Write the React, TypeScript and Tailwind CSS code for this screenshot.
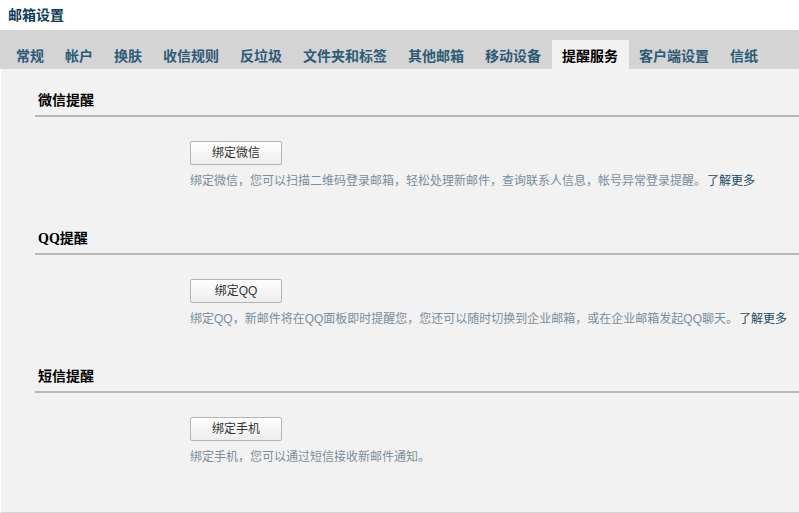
const TABS = ["常规", "帐户", "换肤", "收信规则", "反垃圾", "文件夹和标签", "其他邮箱", "移动设备", "提醒服务", "客户端设置", "信纸"];
const ACTIVE = "提醒服务";

const SECTIONS: { title: string; button: string; desc: string; more?: boolean }[] = [
  {
    title: "微信提醒",
    button: "绑定微信",
    desc: "绑定微信，您可以扫描二维码登录邮箱，轻松处理新邮件，查询联系人信息，帐号异常登录提醒。",
    more: true,
  },
  {
    title: "QQ提醒",
    button: "绑定QQ",
    desc: "绑定QQ，新邮件将在QQ面板即时提醒您，您还可以随时切换到企业邮箱，或在企业邮箱发起QQ聊天。",
    more: true,
  },
  {
    title: "短信提醒",
    button: "绑定手机",
    desc: "绑定手机，您可以通过短信接收新邮件通知。",
  },
];

const cjk = "font-['Liberation_Sans','Noto_Sans_CJK_SC',sans-serif]";

export default function App() {
  return (
    <div className={`w-[799px] h-[513px] bg-white ${cjk}`}>
      <div className="h-[30px] pl-[8px] text-[14px] leading-[30px] font-bold text-[#103d58]">邮箱设置</div>

      <div className="flex h-[39px] items-end bg-[#d4d4d4] pl-[6px]">
        {TABS.map((t) => (
          <div
            key={t}
            className={`h-[29px] pl-[10px] pr-[11px] pt-[6px] text-[14px] leading-[20px] font-bold ${
              t === ACTIVE ? "bg-[#f2f2f2] text-black" : "text-[#2c5b76]"
            }`}
          >
            {t}
          </div>
        ))}
      </div>

      <div className="h-[444px] border-l border-b border-l-white border-b-[#d6d6d6] bg-[#f2f2f2] pl-[34px] pt-[22px]">
        {SECTIONS.map((s, i) => (
          <section key={s.title} className={i > 0 ? "mt-[39px]" : ""}>
            <h2 className="h-[20px] pl-[3px] text-[14px] leading-[20px] font-bold text-black font-['Liberation_Serif','Noto_Sans_CJK_SC',serif]">
              {s.title}
            </h2>
            <div className="mt-[4px] h-[2px] bg-[#b8b8b8]" />
            <div className="pl-[155px]">
              <button className="mt-[24px] h-[24px] w-[92px] rounded-[2px] border border-[#b4b4b4] bg-gradient-to-b from-white to-[#ededed] text-[12px] leading-[22px] text-[#333]">
                {s.button}
              </button>
              <p className="mt-[7px] h-[18px] text-[12px] leading-[18px] text-[#7b8d9a] whitespace-nowrap">
                {s.desc}
                {s.more && <a className="ml-px text-[#1c4a64] cursor-pointer">了解更多</a>}
              </p>
            </div>
          </section>
        ))}
      </div>
    </div>
  );
}
